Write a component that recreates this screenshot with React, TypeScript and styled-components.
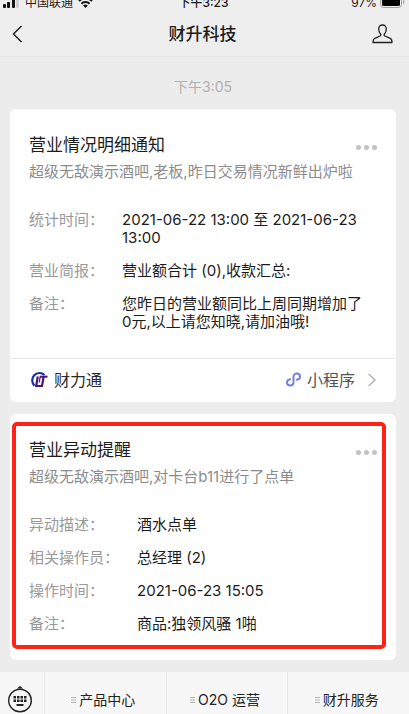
import React from "react";
import styled, { createGlobalStyle } from "styled-components";

const GlobalStyle = createGlobalStyle`
  *, *::before, *::after { box-sizing: border-box; }
  body {
    margin: 0;
    background: #ececec;
    font-family: Inter, "Noto Sans CJK SC", sans-serif;
    color: #1c1c1c;
  }
  button { font: inherit; color: inherit; background: none; border: 0; padding: 0; margin: 0; cursor: pointer; }
  h1, h2, p, dl, dt, dd { margin: 0; font-weight: 400; }
`;

const Screen = styled.div`
  display: flex;
  flex-direction: column;
  height: 100vh;
  overflow: hidden;
`;

const StatusBar = styled.div`
  display: grid;
  grid-template-columns: 1fr auto 1fr;
  grid-template-rows: 12px;
  align-items: end;
  flex: none;
  padding: 0 4px 0 2px;
  overflow: hidden;
  background: #eeeeee;
  font-size: 12px;
  line-height: 18px;
`;

const StatusGroup = styled.div<{ $end?: boolean }>`
  display: flex;
  align-items: center;
  justify-content: ${(p) => (p.$end ? "flex-end" : "flex-start")};
  gap: ${(p) => (p.$end ? "3px" : "5px")};
  height: 18px;
`;

const Clock = styled.span`
  font-weight: 500;
`;

const NavBar = styled.header`
  display: grid;
  grid-template-columns: 1fr auto 1fr;
  align-items: center;
  flex: none;
  height: 45px;
  padding: 0 16px 0 12px;
  background: #eeeeee;
  border-bottom: 1px solid #e6e6e6;
`;

const NavTitle = styled.h1`
  font-size: 17px;
  line-height: 24px;
  font-weight: 500;
`;

const IconButton = styled.button<{ $end?: boolean }>`
  display: flex;
  justify-self: ${(p) => (p.$end ? "end" : "start")};
`;

const Feed = styled.main`
  display: flex;
  flex-direction: column;
  flex: 1;
  min-height: 0;
  gap: 12px;
  padding: 20px 13px 12px 10px;
`;

const Timestamp = styled.time`
  align-self: center;
  font-size: 14px;
  line-height: 20px;
  color: #b0b0b0;
`;

const Card = styled.article`
  position: relative;
  flex: none;
  background: #ffffff;
  border-radius: 6px;
`;

const CardBody = styled.div`
  padding: 24px 19px 27px;
`;

const CardHead = styled.div`
  display: flex;
  justify-content: space-between;
  align-items: center;
`;

const CardTitle = styled.h2`
  font-size: 17px;
  line-height: 24px;
`;

const MoreButton = styled.button`
  display: flex;
  gap: 3px;
  padding-top: 4px;
`;

const Dot = styled.span`
  width: 5px;
  height: 5px;
  border-radius: 50%;
  background: #c2c2c6;
`;

const Summary = styled.p`
  margin-top: 5px;
  font-size: 15px;
  line-height: 20px;
  color: #8c8c8c;
`;

const Details = styled.dl`
  display: grid;
  grid-template-columns: max-content 1fr;
  gap: 15px 18px;
  margin-top: 29px;
  padding-right: 8px;
  font-size: 15px;
  line-height: 18px;
`;

const Label = styled.dt`
  color: #999999;
`;

const Value = styled.dd`
  color: #1c1c1c;
`;

const CardLink = styled.a`
  display: flex;
  align-items: center;
  height: 44px;
  padding: 0 19px 2px;
  border-top: 1px solid #e8e8e8;
  font-size: 16px;
  line-height: 24px;
  color: #2a2a2a;
  text-decoration: none;
`;

const Source = styled.span`
  display: flex;
  align-items: center;
  gap: 6px;
  flex: 1;
`;

const MiniProgram = styled.span`
  display: flex;
  align-items: center;
  gap: 6px;
  color: #555555;
`;

const Highlight = styled.div`
  position: absolute;
  top: 8px;
  right: 10px;
  bottom: 11px;
  left: 2px;
  border: 4px solid #ff2216;
  border-radius: 5px;
  pointer-events: none;
`;

const MenuBar = styled.nav`
  display: grid;
  grid-template-columns: 44px 1fr 1fr 1fr;
  flex: none;
  height: 42px;
  overflow: hidden;
  background: #f7f7f7;
`;

const KeyboardButton = styled.button`
  display: flex;
  justify-content: center;
  align-items: flex-start;
  padding: 13px 4px 0 0;
`;

const MenuButton = styled.button`
  display: flex;
  justify-content: center;
  align-items: center;
  gap: 3px;
  height: 56px;
  padding-right: 4px;
  border-left: 1px solid #e8e8e8;
  font-size: 14px;
  line-height: 20px;
  color: #222222;
`;

const SignalIcon = () => (
  <svg width="18" height="14" viewBox="0 0 18 14" aria-hidden="true">
    <rect x="1" y="8" width="3" height="4" rx="1" fill="#111" />
    <rect x="5" y="6" width="3" height="6" rx="1" fill="#111" />
    <rect x="10" y="3" width="3" height="9" rx="1" fill="#111" />
    <rect x="14" y="0" width="3" height="12" rx="1" fill="#cfcfcf" />
  </svg>
);

const WifiIcon = () => (
  <svg width="15" height="14" viewBox="0 0 15 14" fill="none" stroke="#111" strokeWidth="2" aria-hidden="true">
    <path d="M1 5a9.200 9.200 0 0 1 13 0" />
    <path d="M3.500 7.700a5.600 5.600 0 0 1 8 0" />
    <path d="M5.200 9.600a3.300 3.300 0 0 1 4.600 0L7.500 12z" fill="#111" stroke="none" />
  </svg>
);

const BatteryIcon = () => (
  <svg width="25" height="14" viewBox="0 0 25 14" aria-hidden="true">
    <rect x=".5" y=".5" width="21" height="11" rx="3" fill="none" stroke="#a2a2a2" />
    <rect x="2" y="2" width="18" height="8" rx="1.500" fill="#000" />
    <path d="M23 4q1.500 .5 1.500 2T23 8z" fill="#a2a2a2" />
  </svg>
);

const BackIcon = () => (
  <svg width="11" height="18" viewBox="0 0 11 18" fill="none" stroke="#222" strokeWidth="1.500" aria-hidden="true">
    <path d="M9.500 1 1.500 9l8 8" />
  </svg>
);

const PersonIcon = () => (
  <svg width="21" height="20" viewBox="0 0 21 20" fill="none" stroke="#222" strokeWidth="1.300" strokeLinejoin="round" aria-hidden="true">
    <path d="M10.500 1C8 1 6.700 2.700 6.700 5c0 2.300.8 3.900 1.900 5 .5.700.3 1.600-.5 2L2.700 14.400C1.400 15 1 16 1 18.500h19c0-2.500-.4-3.500-1.700-4.100L12.900 12c-.8-.4-1-1.300-.5-2 1.100-1.100 1.900-2.700 1.900-5 0-2.300-1.300-4-3.800-4z" />
  </svg>
);

const BrandIcon = () => (
  <svg width="19" height="17" viewBox="0 0 19 17" fill="none" aria-hidden="true">
    <path d="M15.500 4A7 7 0 1 0 5.500 14.600" stroke="#1c2f9c" strokeWidth="2.200" />
    <path d="M8.800 5.500 7.200 15H13L14.600 6" stroke="#4b1373" strokeWidth="2.200" />
    <path d="M11 5.700h7.500" stroke="#4b1373" strokeWidth="2" />
    <path d="M11.300 5 10.300 11.500" stroke="#4b1373" strokeWidth="1.200" />
  </svg>
);

const MiniProgramIcon = () => (
  <svg width="15" height="15" viewBox="0 0 15 15" fill="none" stroke="#7482da" strokeWidth="2" strokeLinecap="round" aria-hidden="true">
    <path d="M4.200 7.300C2.300 7.500 1 8.700 1 10.500 1 12.400 2.400 13.500 4.200 13.500c1.900 0 3.300-1.300 3.300-3.200V4.700c0-1.900 1.400-3.200 3.300-3.200 1.800 0 3.200 1.100 3.200 3 0 1.800-1.300 3-3.200 3.200" />
  </svg>
);

const ChevronIcon = () => (
  <svg width="16" height="14" viewBox="0 0 16 14" fill="none" stroke="#b5b5b5" strokeWidth="1.500" aria-hidden="true">
    <path d="m7.500 1 6.500 6-6.500 6" />
  </svg>
);

const KeyboardIcon = () => (
  <svg width="26" height="28" viewBox="0 0 26 28" aria-hidden="true">
    <path d="M10 3.500 13 1 16 3.500z" fill="#222" />
    <circle cx="13" cy="15.500" r="11.300" fill="none" stroke="#222" strokeWidth="1.400" />
    {[6.5, 10, 13.5, 17].map((x) => (
      <React.Fragment key={x}>
        <rect x={x} y="11" width="2.500" height="2.500" fill="#222" />
        <rect x={x} y="14.500" width="2.500" height="2.500" fill="#222" />
      </React.Fragment>
    ))}
    <rect x="9.500" y="19" width="7" height="2" fill="#222" />
  </svg>
);

const MenuLinesIcon = () => (
  <svg width="5" height="8" viewBox="0 0 5 8" stroke="#b4b4b4" aria-hidden="true">
    <path d="M0 1.500h5M0 4h5M0 6.500h5" />
  </svg>
);

type Notice = {
  title: string;
  summary: string;
  details: [string, string][];
  linked?: boolean;
  highlighted?: boolean;
};

const notices: Notice[] = [
  {
    title: "营业情况明细通知",
    summary: "超级无敌演示酒吧,老板,昨日交易情况新鲜出炉啦",
    details: [
      ["统计时间：", "2021-06-22 13:00 至 2021-06-23 13:00"],
      ["营业简报：", "营业额合计 (0),收款汇总:"],
      ["备注：", "您昨日的营业额同比上周同期增加了0元,以上请您知晓,请加油哦!"],
    ],
    linked: true,
  },
  {
    title: "营业异动提醒",
    summary: "超级无敌演示酒吧,对卡台b11进行了点单",
    details: [
      ["异动描述：", "酒水点单"],
      ["相关操作员：", "总经理 (2)"],
      ["操作时间：", "2021-06-23 15:05"],
      ["备注：", "商品:独领风骚 1啪"],
    ],
    highlighted: true,
  },
];

const menus = ["产品中心", "O2O 运营", "财升服务"];

const NoticeCard = ({ title, summary, details, linked, highlighted }: Notice) => (
  <Card>
    <CardBody>
      <CardHead>
        <CardTitle>{title}</CardTitle>
        <MoreButton aria-label="更多">
          <Dot />
          <Dot />
          <Dot />
        </MoreButton>
      </CardHead>
      <Summary>{summary}</Summary>
      <Details>
        {details.map(([label, value]) => (
          <React.Fragment key={label}>
            <Label>{label}</Label>
            <Value>{value}</Value>
          </React.Fragment>
        ))}
      </Details>
    </CardBody>
    {linked && (
      <CardLink href="#">
        <Source>
          <BrandIcon />
          财力通
        </Source>
        <MiniProgram>
          <MiniProgramIcon />
          小程序
          <ChevronIcon />
        </MiniProgram>
      </CardLink>
    )}
    {highlighted && <Highlight />}
  </Card>
);

export default function App() {
  return (
    <>
      <GlobalStyle />
      <Screen>
        <StatusBar>
          <StatusGroup>
            <SignalIcon />
            <span>中国联通</span>
            <WifiIcon />
          </StatusGroup>
          <StatusGroup>
            <Clock>下午3:23</Clock>
          </StatusGroup>
          <StatusGroup $end>
            <span>97%</span>
            <BatteryIcon />
          </StatusGroup>
        </StatusBar>
        <NavBar>
          <IconButton aria-label="返回">
            <BackIcon />
          </IconButton>
          <NavTitle>财升科技</NavTitle>
          <IconButton $end aria-label="公众号资料">
            <PersonIcon />
          </IconButton>
        </NavBar>
        <Feed>
          <Timestamp>下午3:05</Timestamp>
          {notices.map((notice) => (
            <NoticeCard key={notice.title} {...notice} />
          ))}
        </Feed>
        <MenuBar>
          <KeyboardButton aria-label="切换键盘">
            <KeyboardIcon />
          </KeyboardButton>
          {menus.map((name) => (
            <MenuButton key={name}>
              <MenuLinesIcon />
              {name}
            </MenuButton>
          ))}
        </MenuBar>
      </Screen>
    </>
  );
}
